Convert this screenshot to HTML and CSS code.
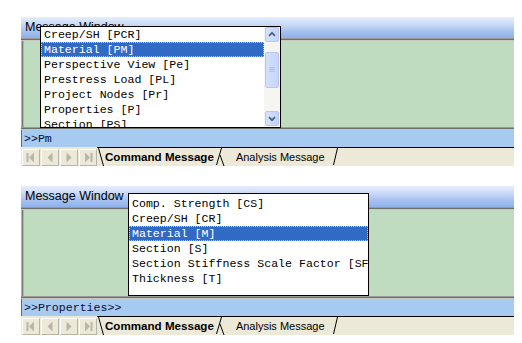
FILE: index.html
```html
<!DOCTYPE html>
<html>
<head>
<meta charset="utf-8">
<link rel="stylesheet" href="styles.css">
</head>
<body>
<div class="page">

  <div class="panel">
    <div class="title">Message Window</div>
    <div class="sep"></div>
    <div class="output"></div>
    <div class="sep"></div>
    <div class="cmd">&gt;&gt;Pm</div>
    <div class="tabbar">
      <div class="nav">
        <span class="navbtn"><svg width="16" height="15" viewBox="0 0 16 15"><rect x="3.5" y="3" width="2" height="9" fill="#b9b6a8"/><path d="M11 2.5 L6 7.5 L11 12.5 Z" fill="#b9b6a8"/></svg></span>
        <span class="navbtn"><svg width="16" height="15" viewBox="0 0 16 15"><path d="M10.5 2.5 L5.5 7.5 L10.5 12.5 Z" fill="#b9b6a8"/></svg></span>
        <span class="navbtn"><svg width="16" height="15" viewBox="0 0 16 15"><path d="M5.5 2.5 L10.5 7.5 L5.5 12.5 Z" fill="#b9b6a8"/></svg></span>
        <span class="navbtn"><svg width="16" height="15" viewBox="0 0 16 15"><path d="M5 2.5 L10 7.5 L5 12.5 Z" fill="#b9b6a8"/><rect x="10.5" y="3" width="2" height="9" fill="#b9b6a8"/></svg></span>
      </div>
      <div class="tabs">
        <svg class="edge" width="8" height="18" viewBox="0 0 8 18"><path d="M1.5 0 L6.5 18" stroke="#000" stroke-width="1" fill="none"/></svg>
        <span class="tab active">Command Message</span>
        <svg class="edge" width="20" height="18" viewBox="0 0 20 18"><path d="M1.5 17 L6.5 0" stroke="#000" stroke-width="1" fill="none"/><path d="M5 7 L9 18" stroke="#000" stroke-width="1" fill="none"/></svg>
        <span class="tab inactive">Analysis Message</span>
        <svg class="edge" width="16" height="18" viewBox="0 0 16 18"><path d="M8.5 17 L12.5 0" stroke="#000" stroke-width="1" fill="none"/></svg>
      </div>
    </div>

    <div class="popup p1">
      <div class="list l1">
        <div class="item">Creep/SH [PCR]</div>
        <div class="item sel">Material [PM]</div>
        <div class="item">Perspective View [Pe]</div>
        <div class="item">Prestress Load [PL]</div>
        <div class="item">Project Nodes [Pr]</div>
        <div class="item">Properties [P]</div>
        <div class="item">Section [PS]</div>
      </div>
      <div class="scrollbar">
        <div class="sbtn"><svg width="14" height="13" viewBox="0 0 14 13"><path d="M3.5 8 L7 4.5 L10.5 8" stroke="#4d6185" stroke-width="2" fill="none"/></svg></div>
        <div class="thumb"><svg width="14" height="8" viewBox="0 0 14 8"><path d="M4 1.5 H10 M4 3.5 H10 M4 5.5 H10" stroke="#a6b8e8" stroke-width="1" fill="none"/></svg></div>
        <div class="track"></div>
        <div class="sbtn"><svg width="14" height="13" viewBox="0 0 14 13"><path d="M3.5 5 L7 8.5 L10.5 5" stroke="#4d6185" stroke-width="2" fill="none"/></svg></div>
      </div>
    </div>
  </div>

  <div class="panel">
    <div class="title">Message Window</div>
    <div class="sep"></div>
    <div class="output"></div>
    <div class="sep"></div>
    <div class="cmd">&gt;&gt;Properties&gt;&gt;</div>
    <div class="tabbar">
      <div class="nav">
        <span class="navbtn"><svg width="16" height="15" viewBox="0 0 16 15"><rect x="3.5" y="3" width="2" height="9" fill="#b9b6a8"/><path d="M11 2.5 L6 7.5 L11 12.5 Z" fill="#b9b6a8"/></svg></span>
        <span class="navbtn"><svg width="16" height="15" viewBox="0 0 16 15"><path d="M10.5 2.5 L5.5 7.5 L10.5 12.5 Z" fill="#b9b6a8"/></svg></span>
        <span class="navbtn"><svg width="16" height="15" viewBox="0 0 16 15"><path d="M5.5 2.5 L10.5 7.5 L5.5 12.5 Z" fill="#b9b6a8"/></svg></span>
        <span class="navbtn"><svg width="16" height="15" viewBox="0 0 16 15"><path d="M5 2.5 L10 7.5 L5 12.5 Z" fill="#b9b6a8"/><rect x="10.5" y="3" width="2" height="9" fill="#b9b6a8"/></svg></span>
      </div>
      <div class="tabs">
        <svg class="edge" width="8" height="18" viewBox="0 0 8 18"><path d="M1.5 0 L6.5 18" stroke="#000" stroke-width="1" fill="none"/></svg>
        <span class="tab active">Command Message</span>
        <svg class="edge" width="20" height="18" viewBox="0 0 20 18"><path d="M1.5 17 L6.5 0" stroke="#000" stroke-width="1" fill="none"/><path d="M5 7 L9 18" stroke="#000" stroke-width="1" fill="none"/></svg>
        <span class="tab inactive">Analysis Message</span>
        <svg class="edge" width="16" height="18" viewBox="0 0 16 18"><path d="M8.5 17 L12.5 0" stroke="#000" stroke-width="1" fill="none"/></svg>
      </div>
    </div>

    <div class="popup p2">
      <div class="list l2">
        <div class="item">Comp. Strength [CS]</div>
        <div class="item">Creep/SH [CR]</div>
        <div class="item sel">Material [M]</div>
        <div class="item">Section [S]</div>
        <div class="item">Section Stiffness Scale Factor [SF]</div>
        <div class="item">Thickness [T]</div>
      </div>
    </div>
  </div>

</div>
</body>
</html>
```

FILE: styles.css
```css
html, body {
  margin: 0;
  padding: 0;
  background: #ffffff;
}

.page {
  padding: 17px 0 0 21px;
  display: flex;
  flex-direction: column;
  gap: 20px;
}

.panel {
  position: relative;
  width: 493px;
  display: flex;
  flex-direction: column;
}

.title {
  height: 21px;
  line-height: 21px;
  padding-left: 4px;
  font-family: "Liberation Sans", Arial, sans-serif;
  font-size: 12.5px;
  color: #000;
  background: linear-gradient(#e6eefc 0%, #c9daf7 35%, #a4c0f0 70%, #8fb1ea 100%);
}

.sep {
  height: 3px;
  background: linear-gradient(#9a9a96 0%, #9a9a96 33%, #6e6e6a 34%, #6e6e6a 66%, #c8c8c0 67%);
}

.output {
  height: 86px;
  background: #c0dcc0;
  box-shadow: inset 1px 0 0 #b4b4ae, inset 2px 0 0 #7a7a74, inset 3px 0 0 #a8b8a8;
}

.cmd {
  height: 17px;
  line-height: 17px;
  padding-left: 2px;
  background: #a6caf0;
  border-left: 1px solid #6a6a6a;
  font-family: "Liberation Mono", "Courier New", monospace;
  font-size: 11.6px;
  color: #0a0a3a;
  white-space: pre;
}

.tabbar {
  height: 19px;
  display: flex;
  background: #ece9d8;
}

.nav {
  width: 76px;
  display: flex;
  padding: 1px 0 1px 1px;
  box-sizing: border-box;
  border-top: 1px solid #ece9d8;
}

.navbtn {
  width: 18px;
  height: 17px;
  margin-right: 1px;
  box-sizing: border-box;
  border: 1px solid;
  border-color: #ffffff #b8b4a4 #b8b4a4 #ffffff;
  display: flex;
  align-items: center;
  justify-content: center;
}

.tabs {
  flex: 1;
  display: flex;
  align-items: stretch;
  border-top: 1px solid #000;
}

.edge {
  display: block;
  flex: none;
}

.tab {
  font-family: "Liberation Sans", Arial, sans-serif;
  font-size: 11px;
  line-height: 18px;
  color: #000;
  white-space: nowrap;
}

.tab.active {
  font-weight: bold;
  font-size: 11.6px;
  padding: 0 1px 0 0;
}

.tab.inactive {
  padding: 0 0 0 1px;
}

.popup {
  position: absolute;
  box-sizing: border-box;
  border: 1px solid #000;
  background: #ffffff;
  display: flex;
  overflow: hidden;
  z-index: 2;
}

.p1 {
  left: 19px;
  top: 9px;
  width: 241px;
  height: 102px;
}

.p2 {
  left: 107px;
  top: 7px;
  width: 241px;
  height: 103px;
}

.list {
  flex: 1;
  min-width: 0;
  overflow: hidden;
}

.l1 {
  padding-top: 0;
}

.l2 {
  padding-top: 2px;
}

.item {
  height: 15px;
  line-height: 15px;
  padding-left: 3px;
  font-family: "Liberation Mono", "Courier New", monospace;
  font-size: 11.6px;
  color: #000;
  white-space: nowrap;
}

.item.sel {
  background: #316ac5;
  color: #ffffff;
  outline: 1px dotted #d8d0a0;
  outline-offset: -1px;
}

.scrollbar {
  width: 16px;
  flex: none;
  display: flex;
  flex-direction: column;
  background: #f5f5f1;
  padding: 0 1px 1px 1px;
  box-sizing: border-box;
}

.sbtn {
  height: 15px;
  box-sizing: border-box;
  border: 1px solid #b7c8ee;
  border-radius: 2px;
  background: linear-gradient(90deg, #d6e2fc, #c2d4fa);
  display: flex;
  align-items: center;
  justify-content: center;
}

.thumb {
  margin-top: 10px;
  height: 36px;
  box-sizing: border-box;
  border: 1px solid #b7c8ee;
  border-radius: 2px;
  background: linear-gradient(90deg, #d3e0fc, #c6d6fb);
  display: flex;
  align-items: center;
  justify-content: center;
}

.track {
  flex: 1;
}
```
